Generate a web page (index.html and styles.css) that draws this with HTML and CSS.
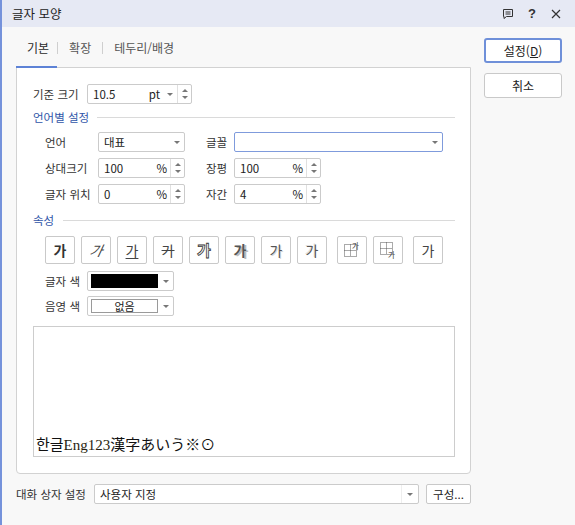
FILE: index.html
```html
<!DOCTYPE html>
<html lang="ko">
<head>
<meta charset="utf-8">
<title>글자 모양</title>
<link rel="stylesheet" href="styles.css">
</head>
<body>
<div class="window">
  <div class="titlebar">
    <span class="title">글자 모양</span>
    <div class="title-icons">
      <svg class="ico-memo" width="12" height="12" viewBox="0 0 12 12"><path d="M1.5 1.5h9v7h-6l-2.5 2v-2h-0.5z" fill="none" stroke="#333" stroke-width="1"/><path d="M3.5 4h5M3.5 6h5" stroke="#333" stroke-width="1"/></svg>
      <span class="ico-help">?</span>
      <svg class="ico-close" width="10" height="10" viewBox="0 0 10 10"><path d="M1 1L9 9M9 1L1 9" stroke="#333" stroke-width="1.2"/></svg>
    </div>
  </div>
  <div class="main">
    <div class="left">
      <div class="tabs">
        <span class="tab active">기본</span><span class="tsep"></span><span class="tab">확장</span><span class="tsep"></span><span class="tab">테두리/배경</span>
      </div>
      <div class="panel">
        <div class="row-size">
          <span class="lbl-size">기준 크기</span>
          <div class="combo size">
            <span class="val">10.5</span><span class="unit">pt</span><span class="arrow"><i class="tri-down"></i></span><span class="spin"><i class="tri-up"></i><i class="tri-down"></i></span>
          </div>
        </div>
        <div class="section first"><span>언어별 설정</span><span class="line"></span></div>
        <div class="lang-grid">
          <span class="lbl">언어</span>
          <div class="combo w87"><span class="val">대표</span><span class="arrow"><i class="tri-down"></i></span></div>
          <span class="lbl lbl2">글꼴</span>
          <div class="combo font focus"><span class="val"></span><span class="arrow"><i class="tri-down"></i></span></div>

          <span class="lbl">상대크기</span>
          <div class="combo w87"><span class="val">100</span><span class="unit pct">%</span><span class="spin"><i class="tri-up"></i><i class="tri-down"></i></span></div>
          <span class="lbl lbl2">장평</span>
          <div class="combo w87"><span class="val">100</span><span class="unit pct">%</span><span class="spin"><i class="tri-up"></i><i class="tri-down"></i></span></div>

          <span class="lbl">글자 위치</span>
          <div class="combo w87"><span class="val">0</span><span class="unit pct">%</span><span class="spin"><i class="tri-up"></i><i class="tri-down"></i></span></div>
          <span class="lbl lbl2">자간</span>
          <div class="combo w87"><span class="val">4</span><span class="unit pct">%</span><span class="spin"><i class="tri-up"></i><i class="tri-down"></i></span></div>
        </div>
        <div class="section second"><span>속성</span><span class="line"></span></div>
        <div class="attrs">
          <span class="attr"><span class="g bold">가</span></span>
          <span class="attr"><span class="g italic">가</span></span>
          <span class="attr"><span class="g under">가</span></span>
          <span class="attr"><span class="g strike">가</span></span>
          <span class="attr"><span class="g outline">가</span></span>
          <span class="attr"><span class="g shadow">가</span></span>
          <span class="attr"><span class="g emboss">가</span></span>
          <span class="attr"><span class="g engrave">가</span></span>
          <span class="attr wide-gap"><svg width="18" height="18" viewBox="0 0 18 18"><g fill="none" stroke="#555" stroke-width="1" stroke-dasharray="1 1"><rect x="1.5" y="3.5" width="12" height="12"/><path d="M7.5 3.5v12M1.5 9.5h12"/></g><text x="9" y="8" font-size="7.5" fill="#333" font-family="Noto Sans CJK KR, sans-serif">가</text></svg></span>
          <span class="attr"><svg width="18" height="18" viewBox="0 0 18 18"><g fill="none" stroke="#555" stroke-width="1" stroke-dasharray="1 1"><rect x="1.5" y="1.5" width="12" height="12"/><path d="M7.5 1.5v12M1.5 7.5h12"/></g><text x="9" y="17" font-size="7.5" fill="#333" font-family="Noto Sans CJK KR, sans-serif">가</text></svg></span>
          <span class="attr wide-gap"><span class="g normal">가</span></span>
        </div>
        <div class="color-row">
          <span class="lbl-c">글자 색</span>
          <div class="combo w87 color"><span class="swatch black"></span><span class="arrow"><i class="tri-down"></i></span></div>
        </div>
        <div class="color-row shade">
          <span class="lbl-c">음영 색</span>
          <div class="combo w87 color"><span class="swatch none">없음</span><span class="arrow"><i class="tri-down"></i></span></div>
        </div>
        <div class="preview">
          <span class="sample">한글<span class="latin">Eng123</span><span class="cjk">漢字あいう</span>※⊙</span>
        </div>
      </div>
    </div>
    <div class="right">
      <button class="btn primary">설정(<u>D</u>)</button>
      <button class="btn">취소</button>
    </div>
  </div>
  <div class="bottom">
    <span class="lbl-b">대화 상자 설정</span>
    <div class="combo dlg"><span class="val">사용자 지정</span><span class="arrow sep"><i class="tri-down"></i></span></div>
    <button class="btn small">구성...</button>
  </div>
</div>
</body>
</html>
```
FILE: styles.css
```css
html, body {
  margin: 0;
  padding: 0;
}
body {
  background: #f8f8f8;
  font-family: "Noto Sans CJK KR", "Noto Sans", sans-serif;
  font-size: 11.5px;
  color: #333;
}
.window {
  width: 575px;
  height: 525px;
  box-sizing: border-box;
  border-left: 2px solid #7592db;
  background: #f8f8f8;
  display: flex;
  flex-direction: column;
}
.titlebar {
  height: 27px;
  flex: none;
  background: #e6e9f4;
  display: flex;
  align-items: center;
  justify-content: space-between;
  padding: 0 14px 0 10px;
}
.title {
  font-size: 12.5px;
  color: #222;
}
.title-icons {
  display: flex;
  align-items: center;
}
.ico-memo { margin-right: 14px; }
.ico-help {
  font-family: "Liberation Sans", sans-serif;
  font-weight: bold;
  font-size: 13px;
  color: #333;
  margin-right: 15px;
}
.main {
  display: flex;
  padding-left: 14px;
  gap: 13px;
}
.left {
  width: 455px;
  flex: none;
}
.tabs {
  position: relative;
  display: flex;
  align-items: flex-end;
  height: 41px;
  margin-bottom: -1px;
}
.tab {
  box-sizing: border-box;
  padding: 13px 11px 10px;
  line-height: 16px;
  border-bottom: 2px solid transparent;
  color: #555;
  font-size: 12px;
}
.tab.active {
  padding-left: 11px;
  padding-right: 8px;
  border-bottom-color: #5d82d6;
  color: #2a2a2a;
}
.tsep {
  width: 1px;
  height: 12px;
  background: #cfcfcf;
  margin-bottom: 14px;
}
.panel {
  height: 407px;
  box-sizing: border-box;
  border: 1px solid #d2d2d2;
  border-radius: 0 0 4px 4px;
  background: #fff;
  padding: 16px 15px 15px 16px;
}
.row-size {
  display: flex;
  align-items: center;
  height: 20px;
}
.lbl-size { width: 54px; }
.combo {
  display: flex;
  align-items: center;
  box-sizing: border-box;
  height: 20px;
  border: 1px solid #cbcbcb;
  border-radius: 2px;
  background: #fff;
  color: #222;
}
.combo .val {
  flex: 1;
  padding-left: 5px;
  white-space: nowrap;
}
.combo.size { width: 105px; }
.combo.size .unit { margin-right: 3px; }
.combo .unit.pct { margin-right: 3px; }
.arrow {
  width: 14px;
  height: 100%;
  display: flex;
  align-items: center;
  justify-content: center;
}
.arrow.sep { border-left: 1px solid #eee; width: 16px; }
.spin {
  width: 13px;
  height: 100%;
  border-left: 1px solid #e0e0e0;
  display: flex;
  flex-direction: column;
  align-items: center;
  justify-content: center;
  gap: 4px;
}
.tri-down, .tri-up {
  display: block;
  width: 0;
  height: 0;
  border-left: 3px solid transparent;
  border-right: 3px solid transparent;
}
.tri-down { border-top: 3px solid #777; }
.tri-up { border-bottom: 3px solid #777; }
.section {
  display: flex;
  align-items: center;
  gap: 8px;
  height: 14px;
  color: #2f55a8;
}
.section .line {
  flex: 1;
  height: 1px;
  background: #dadada;
}
.section.first { margin-top: 6px; }
.section.second { margin-top: 9px; gap: 9px; }
.lang-grid {
  display: grid;
  grid-template-columns: 53px 87px 49px 209px;
  grid-auto-rows: 20px;
  row-gap: 6px;
  padding-left: 12px;
  margin-top: 8px;
  align-items: center;
}
.lbl2 { padding-left: 21px; }
.w87 { width: 87px; }
.combo.font { width: 209px; }
.combo.focus { border-color: #7f9bdc; }
.attrs {
  display: flex;
  gap: 6px;
  margin-top: 9px;
  padding-left: 12px;
}
.attr {
  box-sizing: border-box;
  width: 30px;
  height: 28px;
  border: 1px solid #c9c9c9;
  border-radius: 2px;
  background: #fff;
  display: flex;
  align-items: center;
  justify-content: center;
}
.attr.wide-gap { margin-left: 4px; }
.g {
  font-size: 14px;
  line-height: 16px;
  color: #444;
}
.g.bold { font-weight: 700; color: #333; }
.g.italic { font-style: italic; display: inline-block; transform: skewX(-12deg); }
.g.under { text-decoration: underline; text-underline-offset: 2px; }
.g.strike { text-decoration: line-through; }
.g.outline { color: #fff; -webkit-text-stroke: 0.8px #333; font-weight: 700; font-size: 15px; }
.g.shadow { font-weight: 700; color: #555; text-shadow: 2px 1px 0 #bbb; }
.g.emboss { color: #555; text-shadow: 1px 1px 0 #d8d8d8; }
.g.engrave { color: #555; text-shadow: -1px -1px 0 #e0e0e0; }
.g.normal { color: #444; }
.color-row {
  display: flex;
  align-items: center;
  height: 20px;
  margin-top: 7px;
}
.color-row.shade { margin-top: 5px; }
.lbl-c {
  width: 42px;
  padding-left: 12px;
}
.combo.color { padding-left: 3px; }
.swatch {
  box-sizing: border-box;
  width: 67px;
  height: 14px;
  flex: none;
}
.swatch.black { background: #000; }
.swatch.none {
  border: 1px solid #9a9a9a;
  background: #fff;
  display: flex;
  align-items: center;
  justify-content: center;
  font-size: 11px;
  line-height: 12px;
  color: #222;
}
.combo.color .arrow { flex: 1; }
.preview {
  box-sizing: border-box;
  width: 422px;
  height: 131px;
  margin-top: 10px;
  border: 1px solid #cdcdcd;
  background: #fff;
  display: flex;
  align-items: flex-end;
  padding: 0 0 2px 2px;
}
.sample {
  font-family: "Liberation Serif", "Noto Sans CJK KR", serif;
  font-size: 15px;
  line-height: 18px;
  color: #111;
}
.sample .latin { color: #2a1f10; }
.sample .cjk { font-family: "Noto Sans CJK JP", "Noto Sans CJK KR", sans-serif; }
.right {
  display: flex;
  flex-direction: column;
  gap: 10px;
  margin-top: 11px;
}
.btn {
  box-sizing: border-box;
  width: 78px;
  height: 25px;
  border: 1px solid #c9c9c9;
  border-radius: 3px;
  background: #fff;
  font-family: inherit;
  font-size: 12px;
  color: #222;
  padding: 0;
}
.btn.primary { border: 2px solid #6f90d9; }
.btn.small {
  width: 45px;
  height: 20px;
  font-size: 11.5px;
  margin-left: 7px;
  border-radius: 2px;
}
.bottom {
  display: flex;
  align-items: center;
  margin-top: 10px;
  padding-left: 14px;
}
.lbl-b { width: 78px; flex: none; }
.combo.dlg { width: 325px; }
```
